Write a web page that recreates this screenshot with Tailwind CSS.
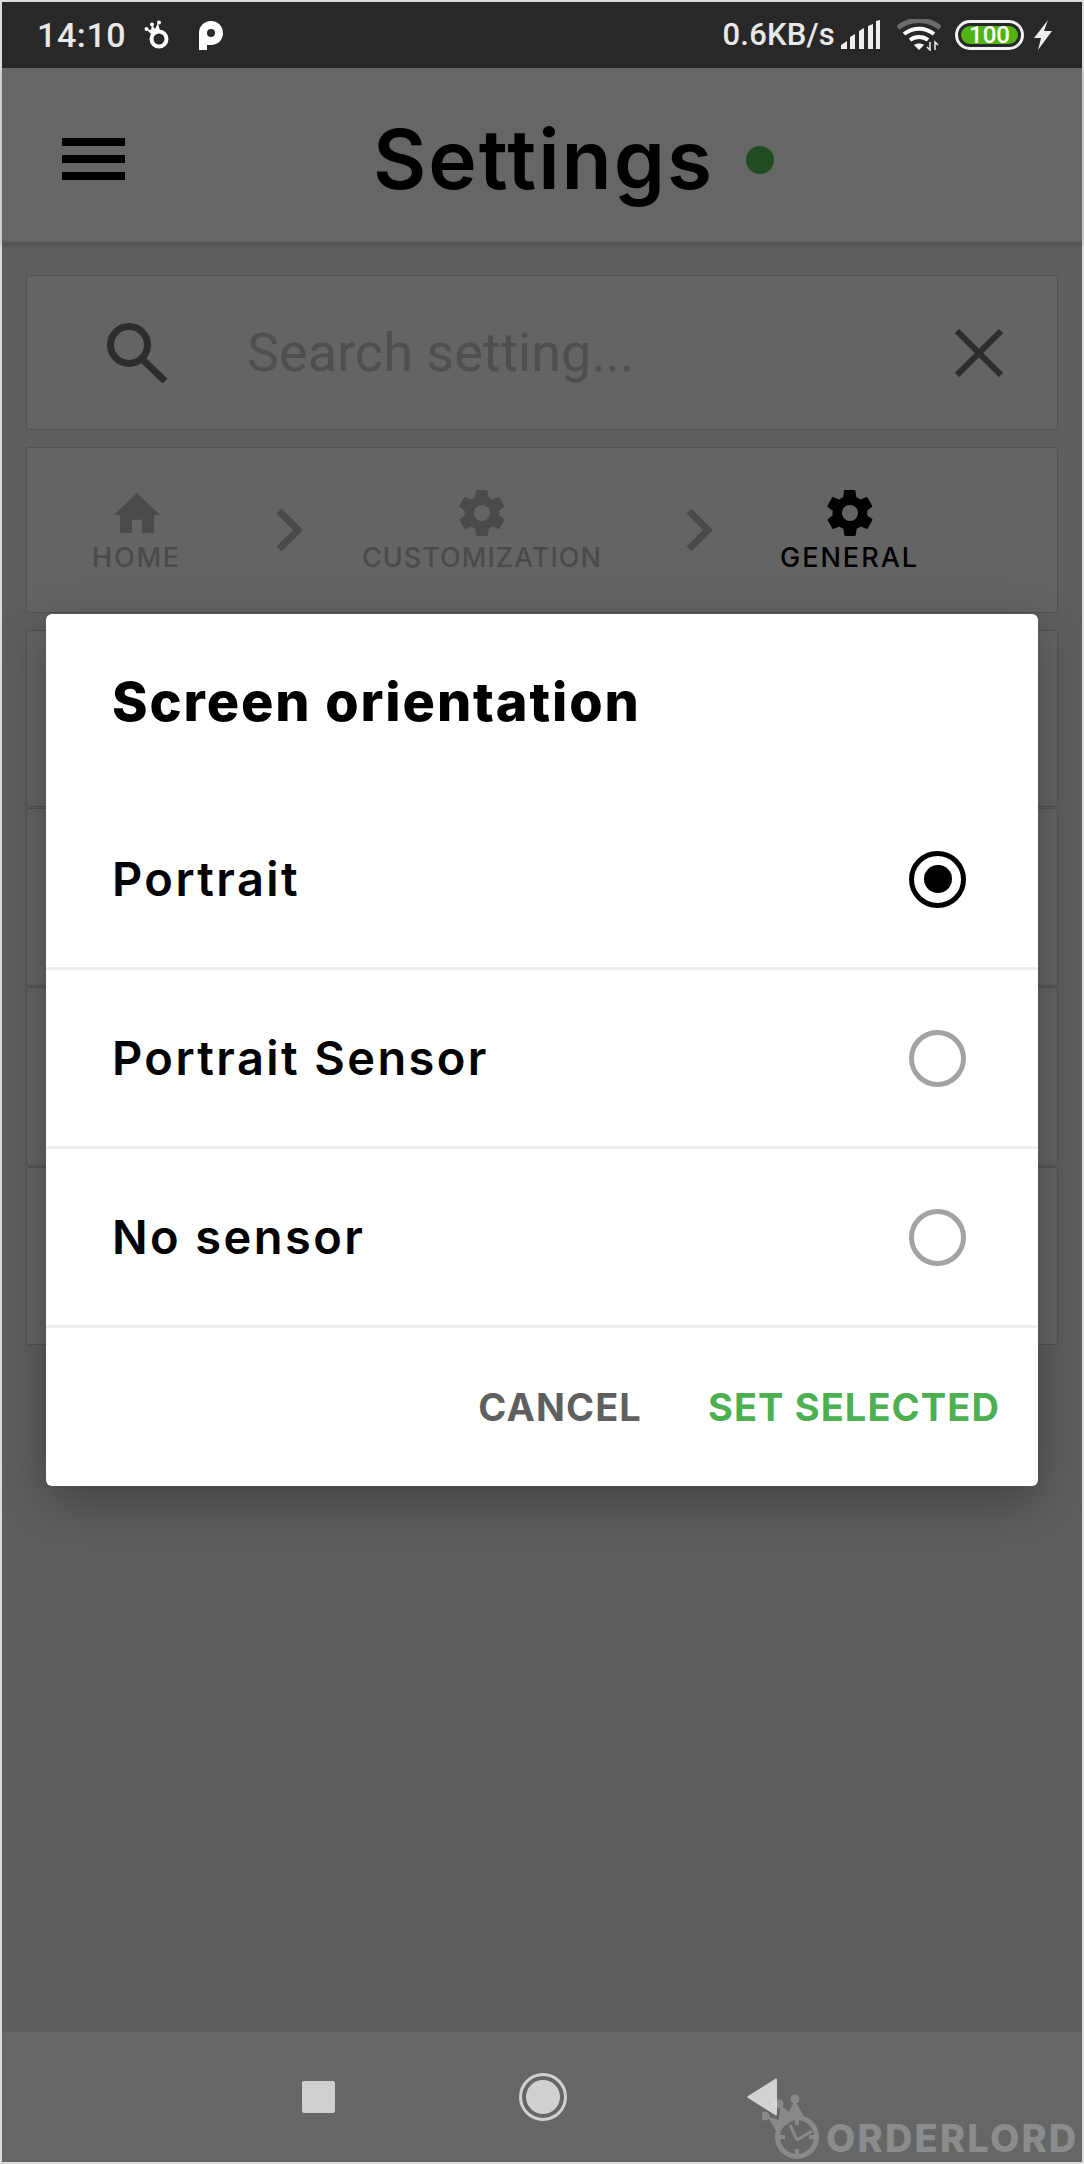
<!DOCTYPE html>
<html lang="en">
<head>
  <meta charset="utf-8" />
  <title>Settings</title>
  <script src="https://cdn.jsdelivr.net/npm/@tailwindcss/browser@4"></script>
</head>
<body class="bg-[#dcdcdc] font-['Inter',sans-serif]">
  <div class="relative w-[1084px] h-[2164px] pt-[2px] px-[2px] pb-[2px] overflow-hidden">
    <div class="relative w-full h-full flex flex-col bg-[#5e5e5e]">

      <!-- status bar -->
      <div class="h-[66px] shrink-0 bg-[#282828] flex items-center justify-between pl-[35px] pr-[29px] font-['Roboto',sans-serif] font-medium text-[#e8e8e8]">
        <div class="flex items-center">
          <span class="text-[34px] tracking-[0.6px]">14:10</span>
          <svg class="ml-[18px] w-[30px] h-[30px]" viewBox="0 0 30 30" fill="#fff">
            <circle cx="15" cy="19" r="7.500" fill="none" stroke="#fff" stroke-width="4" />
            <circle cx="2.500" cy="9" r="2" /><circle cx="8" cy="4.500" r="2" /><circle cx="15" cy="2.500" r="2" />
            <path d="M2 9l5 1 1-5 3 4 3-6 2 8-7 5z" />
          </svg>
          <svg class="ml-[24px] w-[26px] h-[30px]" viewBox="0 0 26 30" fill="#fff">
            <path d="M1 30V13C1 6 6 1 13 1s12 5 12 12-5 12-12 12H9v5zM13 9a4 4 0 1 0 0 8 4 4 0 0 0 0-8z" fill-rule="evenodd" />
          </svg>
        </div>
        <div class="flex items-center">
          <span class="text-[31px] tracking-[0.2px]">0.6KB/s</span>
          <svg class="ml-[6px] w-[40px] h-[30px]" viewBox="0 0 40 30" fill="#eee">
            <path d="M0 29v-4l6-4v8zM9 29V17l5-3v15zM18 29V11l5-3v21zM27 29V6l5-2v25zM35 29V1l4-1v29z" />
          </svg>
          <svg class="ml-[16px] w-[44px] h-[32px]" viewBox="0 0 44 32" fill="none">
            <path d="M1 9C12-1 32-1 43 9" stroke="#6b6b6b" stroke-width="5" />
            <path d="M7 15c9-7 21-7 30 0M13 21c5-4 13-4 18 0" stroke="#fff" stroke-width="4" />
            <path d="M22 31l-5-5c3-2 7-2 10 0z" fill="#fff" />
            <path d="M33 23v8l-3-3M38 31v-8l3 3" stroke="#eee" stroke-width="1.500" />
          </svg>
          <div class="ml-[14px] w-[69px] h-[30px] rounded-full border-[3px] border-[#f2f2f2] p-[3px]">
            <div class="h-full rounded-full bg-[#50b414] flex items-center justify-center text-white text-[24px] leading-none">100</div>
          </div>
          <svg class="ml-[9px] w-[20px] h-[30px]" viewBox="0 0 20 30" fill="#eee">
            <path d="M15 0L1 18h7L5 30 19 11h-8z" />
          </svg>
        </div>
      </div>

      <!-- header -->
      <div class="relative h-[175px] shrink-0 bg-[#666666] border-b-2 border-[#5a5a5a] shadow-[0_2px_5px_rgba(0,0,0,0.2)] flex items-center">
        <div class="absolute left-[60px] top-[70px] w-[63px] flex flex-col gap-[9px]">
          <div class="h-[8px] bg-black"></div>
          <div class="h-[8px] bg-black"></div>
          <div class="h-[8px] bg-black"></div>
        </div>
        <div class="ml-[371px] mt-[10px] flex items-center">
          <span class="text-[82px] leading-none font-semibold tracking-[2px] text-black">Settings</span>
          <span class="ml-[32px] w-[28px] h-[28px] rounded-full bg-[#1f4b22]"></span>
        </div>
      </div>

      <!-- cards -->
      <div class="flex-1 px-[24px] pt-[32px] flex flex-col gap-[17px]">
        <div class="h-[155px] rounded-[3px] bg-[#646464] border border-[#525252] flex items-center pl-[79px] pr-[54px]">
          <svg class="w-[62px] h-[60px] shrink-0" viewBox="0 0 62 60" fill="none" stroke="#2d2d2d">
            <circle cx="23" cy="22" r="18.500" stroke-width="7" />
            <path d="M36 36l23 22" stroke-width="7" />
          </svg>
          <span class="ml-[79px] flex-1 font-['Roboto',sans-serif] text-[54px] leading-none text-[#4f4f4f]">Search setting...</span>
          <svg class="w-[48px] h-[48px]" viewBox="0 0 48 48" stroke="#2d2d2d" stroke-width="6">
            <path d="M2 2l44 44M46 2L2 46" />
          </svg>
        </div>
        <div class="h-[166px] rounded-[3px] bg-[#646464] border border-[#525252] flex items-start pt-[42px] pl-[65px] text-[#4a4a4a]">
          <div class="flex flex-col items-center w-[89px]">
            <svg class="w-[46px] h-[40px] mt-[3px]" viewBox="0 0 46 42" fill="#4a4a4a" preserveAspectRatio="none"><path d="M23 0L0 23h6v19h12V28h10v14h12V23h6z" /></svg>
            <span class="mt-[11px] text-[27px] leading-[28px] font-medium tracking-[1.800px]">HOME</span>
          </div>
          <svg class="ml-[95px] mt-[19px] w-[26px] h-[42px]" viewBox="0 0 26 42" fill="none" stroke="#4a4a4a" stroke-width="7"><path d="M3 2l19 19L3 40" /></svg>
          <div class="ml-[61px] flex flex-col items-center w-[238px]">
            <svg class="w-[46px] h-[46px]" viewBox="2 2 20 20" fill="#4a4a4a"><path d="M19.400 13c.1-.3.1-.7.1-1s0-.7-.1-1l2.100-1.600c.2-.2.2-.4.1-.6l-2-3.500c-.1-.2-.4-.3-.6-.2l-2.500 1c-.5-.4-1.100-.7-1.700-1l-.4-2.600c0-.3-.2-.5-.5-.5h-4c-.3 0-.5.2-.5.400l-.4 2.700c-.6.200-1.200.6-1.700 1l-2.500-1c-.2-.1-.5 0-.6.200l-2 3.500c-.1.2-.1.4.1.600L4.500 11c0 .3-.1.700-.1 1s0 .7.1 1l-2.100 1.600c-.2.2-.2.4-.1.6l2 3.500c.1.2.4.3.6.2l2.500-1c.5.4 1.100.7 1.700 1l.4 2.600c0 .3.2.5.5.5h4c.3 0 .5-.2.5-.4l.4-2.700c.6-.2 1.200-.6 1.700-1l2.500 1c.2.1.5 0 .6-.2l2-3.500c.1-.2.1-.4-.1-.6zM12 15.500a3.500 3.500 0 1 1 0-7 3.500 3.500 0 0 1 0 7z" /></svg>
            <span class="mt-[8px] text-[27px] leading-[28px] font-medium tracking-[1px] whitespace-nowrap">CUSTOMIZATION</span>
          </div>
          <svg class="ml-[85px] mt-[19px] w-[26px] h-[42px]" viewBox="0 0 26 42" fill="none" stroke="#4a4a4a" stroke-width="7"><path d="M3 2l19 19L3 40" /></svg>
          <div class="ml-[69px] flex flex-col items-center w-[137px] text-black">
            <svg class="w-[46px] h-[46px]" viewBox="2 2 20 20" fill="#000"><path d="M19.400 13c.1-.3.1-.7.1-1s0-.7-.1-1l2.100-1.600c.2-.2.2-.4.1-.6l-2-3.500c-.1-.2-.4-.3-.6-.2l-2.500 1c-.5-.4-1.100-.7-1.700-1l-.4-2.600c0-.3-.2-.5-.5-.5h-4c-.3 0-.5.2-.5.400l-.4 2.700c-.6.200-1.200.6-1.700 1l-2.500-1c-.2-.1-.5 0-.6.200l-2 3.500c-.1.2-.1.4.1.600L4.500 11c0 .3-.1.700-.1 1s0 .7.1 1l-2.100 1.600c-.2.2-.2.4-.1.6l2 3.500c.1.2.4.3.6.2l2.500-1c.5.4 1.100.7 1.700 1l.4 2.600c0 .3.2.5.5.5h4c.3 0 .5-.2.5-.4l.4-2.700c.6-.2 1.200-.6 1.700-1l2.500 1c.2.1.5 0 .6-.2l2-3.500c.1-.2.1-.4-.1-.6zM12 15.500a3.500 3.500 0 1 1 0-7 3.500 3.500 0 0 1 0 7z" /></svg>
            <span class="mt-[8px] text-[27px] leading-[28px] font-medium tracking-[2px]">GENERAL</span>
          </div>
        </div>
        <div class="flex flex-col gap-px">
          <div class="h-[177px] rounded-[3px] bg-[#646464] border border-[#525252]"></div>
          <div class="h-[178px] rounded-[3px] bg-[#646464] border border-[#525252]"></div>
          <div class="h-[179px] rounded-[3px] bg-[#646464] border border-[#525252]"></div>
          <div class="h-[178px] rounded-[3px] bg-[#646464] border border-[#525252]"></div>
        </div>
      </div>

      <!-- nav bar -->
      <div class="relative h-[130px] shrink-0 bg-[#666666] flex items-start pt-[41px]">
        <div class="ml-[300px] mt-[8px] w-[33px] h-[32px] rounded-[2px] bg-[#d0d0d0]"></div>
        <div class="ml-[184px] w-[48px] h-[48px] rounded-full border-[3px] border-[#d0d0d0] p-[4px]">
          <div class="w-full h-full rounded-full bg-[#d0d0d0]"></div>
        </div>
        <svg class="ml-[179px] mt-[5px] w-[32px] h-[38px]" viewBox="0 0 32 38" fill="#d2d2d2"><path d="M29 1c1-1 2 0 2 1v34c0 1-1 2-2 1L2 20c-1-.6-1-1.400 0-2z" /></svg>
      </div>

      <!-- watermark -->
      <div class="absolute left-[760px] top-[2085px] w-[320px] h-[76px] pointer-events-none">
        <svg class="absolute left-0 top-0 w-[70px] h-[76px] opacity-[0.23]" viewBox="0 0 70 76" fill="#fff">
          <path d="M5 29l12 4 1-15 9 7 6-12 9 17-3 1c-9 2-18 7-23 16z" />
          <circle cx="3" cy="29" r="4.500" /><circle cx="17" cy="17" r="4.500" /><circle cx="33" cy="12" r="4.500" />
          <path d="M35 28a22 22 0 1 0 0 44 22 22 0 0 0 0-44zm0 5a17 17 0 1 1 0 34 17 17 0 0 1 0-34z" fill-rule="evenodd" />
          <path d="M33 32h4v6h-4zM33 62h4v6h-4zM17 48h6v4h-6zM47 48h6v4h-6z" />
          <path d="M35 53l-7-15M35 53l15-9" fill="none" stroke="#fff" stroke-width="3" />
        </svg>
        <span class="absolute left-[64px] top-[28px] text-[38px] leading-[46px] font-extrabold text-white/25 tracking-[2.200px] whitespace-nowrap">ORDERLORD</span>
      </div>

      <!-- dialog -->
      <div class="absolute left-[44px] top-[612px] w-[992px] h-[872px] bg-white rounded-[6px] shadow-[0_16px_50px_rgba(0,0,0,0.3)] flex flex-col">
        <div class="h-[177px] pl-[66px] pt-[56px] text-[54px] leading-[64px] font-extrabold tracking-[1.900px] text-black">Screen orientation</div>
        <div class="h-[179px] border-b-[3px] border-[#eeeeee] flex items-center justify-between pl-[66px] pr-[72px] text-[47px] font-semibold tracking-[2.400px] text-black">
          <span>Portrait</span>
          <span class="w-[57px] h-[57px] rounded-full border-[5px] border-black flex items-center justify-center"><span class="w-[28px] h-[28px] rounded-full bg-black"></span></span>
        </div>
        <div class="h-[179px] border-b-[3px] border-[#eeeeee] flex items-center justify-between pl-[66px] pr-[72px] text-[47px] font-semibold tracking-[2.400px] text-black">
          <span>Portrait Sensor</span>
          <span class="w-[57px] h-[57px] rounded-full border-[5px] border-[#a3a3a3]"></span>
        </div>
        <div class="h-[179px] border-b-[3px] border-[#eeeeee] flex items-center justify-between pl-[66px] pr-[72px] text-[47px] font-semibold tracking-[2.400px] text-black">
          <span>No sensor</span>
          <span class="w-[57px] h-[57px] rounded-full border-[5px] border-[#a3a3a3]"></span>
        </div>
        <div class="flex-1 flex items-center justify-end pr-[38px] gap-[66px] text-[38px] font-bold tracking-[1.100px]">
          <span class="text-[#5f5f5f]">CANCEL</span>
          <span class="text-[#4caf50]">SET SELECTED</span>
        </div>
      </div>

    </div>
  </div>
</body>
</html>
